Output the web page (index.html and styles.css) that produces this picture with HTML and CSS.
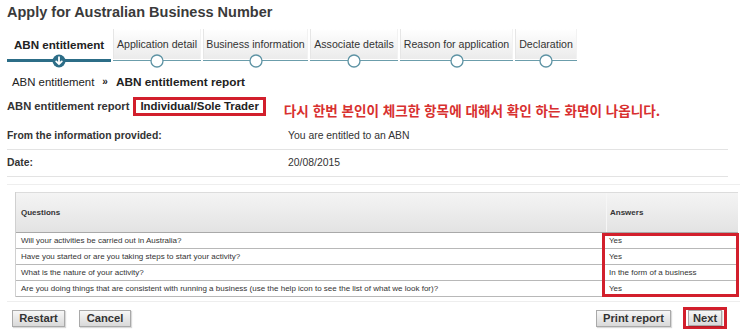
FILE: index.html
```html
<!DOCTYPE html>
<html lang="ko">
<head>
<meta charset="utf-8">
<title>Apply for Australian Business Number</title>
<link rel="stylesheet" href="styles.css">
</head>
<body>
<div class="page">
  <h1 class="title">Apply for Australian Business Number</h1>

  <nav class="tabs">
    <div class="tab tab-active w1">
      <div class="tab-label">ABN entitlement</div>
      <div class="tab-line">
        <svg class="dot" width="14" height="14" viewBox="0 0 14 14"><circle cx="7" cy="7" r="6.5" fill="#2c6d87"/><path d="M7 3.2V10M4.2 7.4L7 10.2L9.8 7.4" fill="none" stroke="#fff" stroke-width="1.8" stroke-linecap="round" stroke-linejoin="round"/></svg>
      </div>
    </div>
    <div class="tab w2">
      <div class="tab-label">Application detail</div>
      <div class="tab-line"><svg class="dot" width="14" height="14" viewBox="0 0 14 14"><circle cx="7" cy="7" r="6" fill="#fff" stroke="#5d93a4" stroke-width="1.3"/></svg></div>
    </div>
    <div class="tab w3">
      <div class="tab-label">Business information</div>
      <div class="tab-line"><svg class="dot" width="14" height="14" viewBox="0 0 14 14"><circle cx="7" cy="7" r="6" fill="#fff" stroke="#5d93a4" stroke-width="1.3"/></svg></div>
    </div>
    <div class="tab w4">
      <div class="tab-label">Associate details</div>
      <div class="tab-line"><svg class="dot" width="14" height="14" viewBox="0 0 14 14"><circle cx="7" cy="7" r="6" fill="#fff" stroke="#5d93a4" stroke-width="1.3"/></svg></div>
    </div>
    <div class="tab w5">
      <div class="tab-label">Reason for application</div>
      <div class="tab-line"><svg class="dot" width="14" height="14" viewBox="0 0 14 14"><circle cx="7" cy="7" r="6" fill="#fff" stroke="#5d93a4" stroke-width="1.3"/></svg></div>
    </div>
    <div class="tab w6">
      <div class="tab-label">Declaration</div>
      <div class="tab-line"><svg class="dot" width="14" height="14" viewBox="0 0 14 14"><circle cx="7" cy="7" r="6" fill="#fff" stroke="#5d93a4" stroke-width="1.3"/></svg></div>
    </div>
  </nav>

  <div class="crumbs">
    <span>ABN entitlement</span>
    <span class="sep">»</span>
    <strong>ABN entitlement report</strong>
  </div>

  <div class="report-head">
    <span class="report-title">ABN entitlement report</span>
    <span class="type-box">Individual/Sole Trader</span>
    <span class="note">다시 한번 본인이 체크한 항목에 대해서 확인 하는 화면이 나옵니다.</span>
  </div>

  <div class="info-row first">
    <span class="info-label">From the information provided:</span>
    <span class="info-value">You are entitled to an ABN</span>
  </div>
  <div class="info-row">
    <span class="info-label">Date:</span>
    <span class="info-value">20/08/2015</span>
  </div>

  <section class="qa">
    <div class="qa-table">
      <div class="qa-row qa-head">
        <div class="q">Questions</div>
        <div class="a">Answers</div>
      </div>
      <div class="qa-row">
        <div class="q">Will your activities be carried out in Australia?</div>
        <div class="a">Yes</div>
      </div>
      <div class="qa-row">
        <div class="q">Have you started or are you taking steps to start your activity?</div>
        <div class="a">Yes</div>
      </div>
      <div class="qa-row">
        <div class="q">What is the nature of your activity?</div>
        <div class="a">In the form of a business</div>
      </div>
      <div class="qa-row">
        <div class="q">Are you doing things that are consistent with running a business (use the help icon to see the list of what we look for)?</div>
        <div class="a">Yes</div>
      </div>
      <div class="answer-mark"></div>
    </div>
  </section>

  <div class="actions">
    <div class="actions-left">
      <button class="btn btn-restart">Restart</button>
      <button class="btn btn-cancel">Cancel</button>
    </div>
    <div class="actions-right">
      <button class="btn btn-print">Print report</button>
      <span class="next-mark"><button class="btn btn-next">Next</button></span>
    </div>
  </div>
</div>
</body>
</html>
```

FILE: styles.css
```css
* { box-sizing: border-box; }

body {
  margin: 0;
  background: #fff;
  font-family: "Liberation Sans", Arial, sans-serif;
  color: #222;
}

.page {
  width: 740px;
  height: 334px;
  overflow: hidden;
  padding: 4px 0 0 7px;
}

.title {
  margin: 0;
  font-size: 14.5px;
  line-height: 17px;
  font-weight: bold;
  color: #3a3a3a;
}

/* ---------- steps ---------- */
.tabs {
  display: flex;
  gap: 2px;
  margin-top: 8px;
}

.tab { display: flex; flex-direction: column; }
.w1 { width: 104px; }
.w2 { width: 88px; }
.w3 { width: 105px; }
.w4 { width: 88px; }
.w5 { width: 113px; }
.w6 { width: 62px; }

.tab-label {
  height: 30px;
  display: flex;
  align-items: center;
  justify-content: center;
  font-size: 10.6px;
  color: #333;
  white-space: nowrap;
  background: linear-gradient(#ffffff, #ebebeb);
  border-left: 1px solid #e6e6e6;
  border-right: 1px solid #f2f2f2;
}

.tab-active .tab-label {
  background: #fff;
  border: none;
  font-weight: bold;
  font-size: 11.6px;
  color: #222;
}

.tab-line {
  position: relative;
  height: 3px;
  display: flex;
  align-items: center;
}
.tab-line::before {
  content: "";
  flex: 1;
  height: 1px;
  background: #6b9dab;
}
.tab-active .tab-line::before {
  height: 3px;
  background: #2c6d87;
}

.dot {
  position: absolute;
  left: 50%;
  top: 50%;
  margin: -7px 0 0 -7px;
}

/* ---------- breadcrumb ---------- */
.crumbs {
  margin-top: 13px;
  padding-left: 5px;
  font-size: 11.4px;
  line-height: 14px;
  color: #222;
  display: flex;
  align-items: center;
}
.crumbs .sep {
  font-weight: bold;
  margin: 0 8px;
  font-size: 10px;
}
.crumbs strong { font-size: 11.8px; }

/* ---------- report head ---------- */
.report-head {
  margin-top: 8px;
  display: flex;
  align-items: flex-start;
}
.report-title {
  font-size: 11.2px;
  font-weight: bold;
  line-height: 19px;
  color: #333;
}
.type-box {
  margin-left: 4px;
  border: 3px solid #d21f2c;
  padding: 0 4px;
  font-size: 11.4px;
  font-weight: bold;
  line-height: 13px;
  color: #222;
}
.note {
  margin-left: 18px;
  margin-top: 5px;
  font-family: "Noto Sans CJK KR", "Noto Sans", sans-serif;
  font-size: 13.6px;
  font-weight: bold;
  line-height: 17px;
  color: #d8302f;
  white-space: nowrap;
}

/* ---------- info rows ---------- */
.info-row {
  width: 721px;
  display: flex;
  padding: 6px 0 7px;
  border-bottom: 1px solid #e3e3e3;
  font-size: 10.4px;
  line-height: 13px;
}
.info-row.first {
  margin-top: 3px;
  padding-top: 7px;
}
.info-label {
  width: 281px;
  font-weight: bold;
  color: #333;
}
.info-value { color: #333; }

/* ---------- questions table ---------- */
.qa {
  margin-top: 7px;
  border-top: 1px solid #eeeeee;
  border-bottom: 1px solid #eeeeee;
  padding: 7px 0 4px 8px;
  width: 733px;
}

.qa-table {
  position: relative;
  width: 723px;
  border-left: 1px solid #d0d0d0;
  font-size: 8px;
  color: #333;
}

.qa-row {
  display: grid;
  grid-template-columns: 590px 1fr;
  height: 16px;
  align-items: center;
  border-bottom: 1px solid #b8b8b8;
  white-space: nowrap;
}
.qa-row .q { padding-left: 5px; }
.qa-row .a { padding-left: 3px; }

.qa-head {
  height: 41px;
  border-top: 1px solid #dcdcdc;
  border-bottom: 1px solid #a9a9a9;
  background: linear-gradient(#f4f4f4, #e3e3e3);
  font-weight: bold;
  align-items: stretch;
}
.qa-head .q,
.qa-head .a {
  display: flex;
  align-items: center;
}
.qa-head .a {
  border-left: 1px solid #f6f6f6;
}

.answer-mark {
  position: absolute;
  left: 586px;
  top: 41px;
  width: 137px;
  height: 64px;
  border: 3px solid #d21f2c;
  pointer-events: none;
}

/* ---------- buttons ---------- */
.actions {
  margin-top: 5px;
  width: 720px;
  height: 22px;
  display: flex;
  justify-content: space-between;
  align-items: center;
}
.actions-left {
  display: flex;
  gap: 14px;
  padding-left: 5px;
}
.actions-right {
  display: flex;
  align-items: center;
  gap: 12px;
}

.btn {
  font-family: "Liberation Sans", Arial, sans-serif;
  font-size: 11.2px;
  font-weight: bold;
  color: #333;
  height: 17px;
  padding: 0;
  border: 1px solid #a9a9a9;
  background: linear-gradient(#f7f7f7, #d9d9d9);
  box-shadow: 1px 1px 1px rgba(0,0,0,0.15);
  line-height: 15px;
}
.btn-restart { width: 53px; }
.btn-cancel { width: 52px; }
.btn-print { width: 75px; }
.btn-next { width: 34px; height: 16px; line-height: 14px; }

.next-mark {
  display: flex;
  height: 22px;
  border: 3px solid #d21f2c;
  padding: 0 2px;
}
```
